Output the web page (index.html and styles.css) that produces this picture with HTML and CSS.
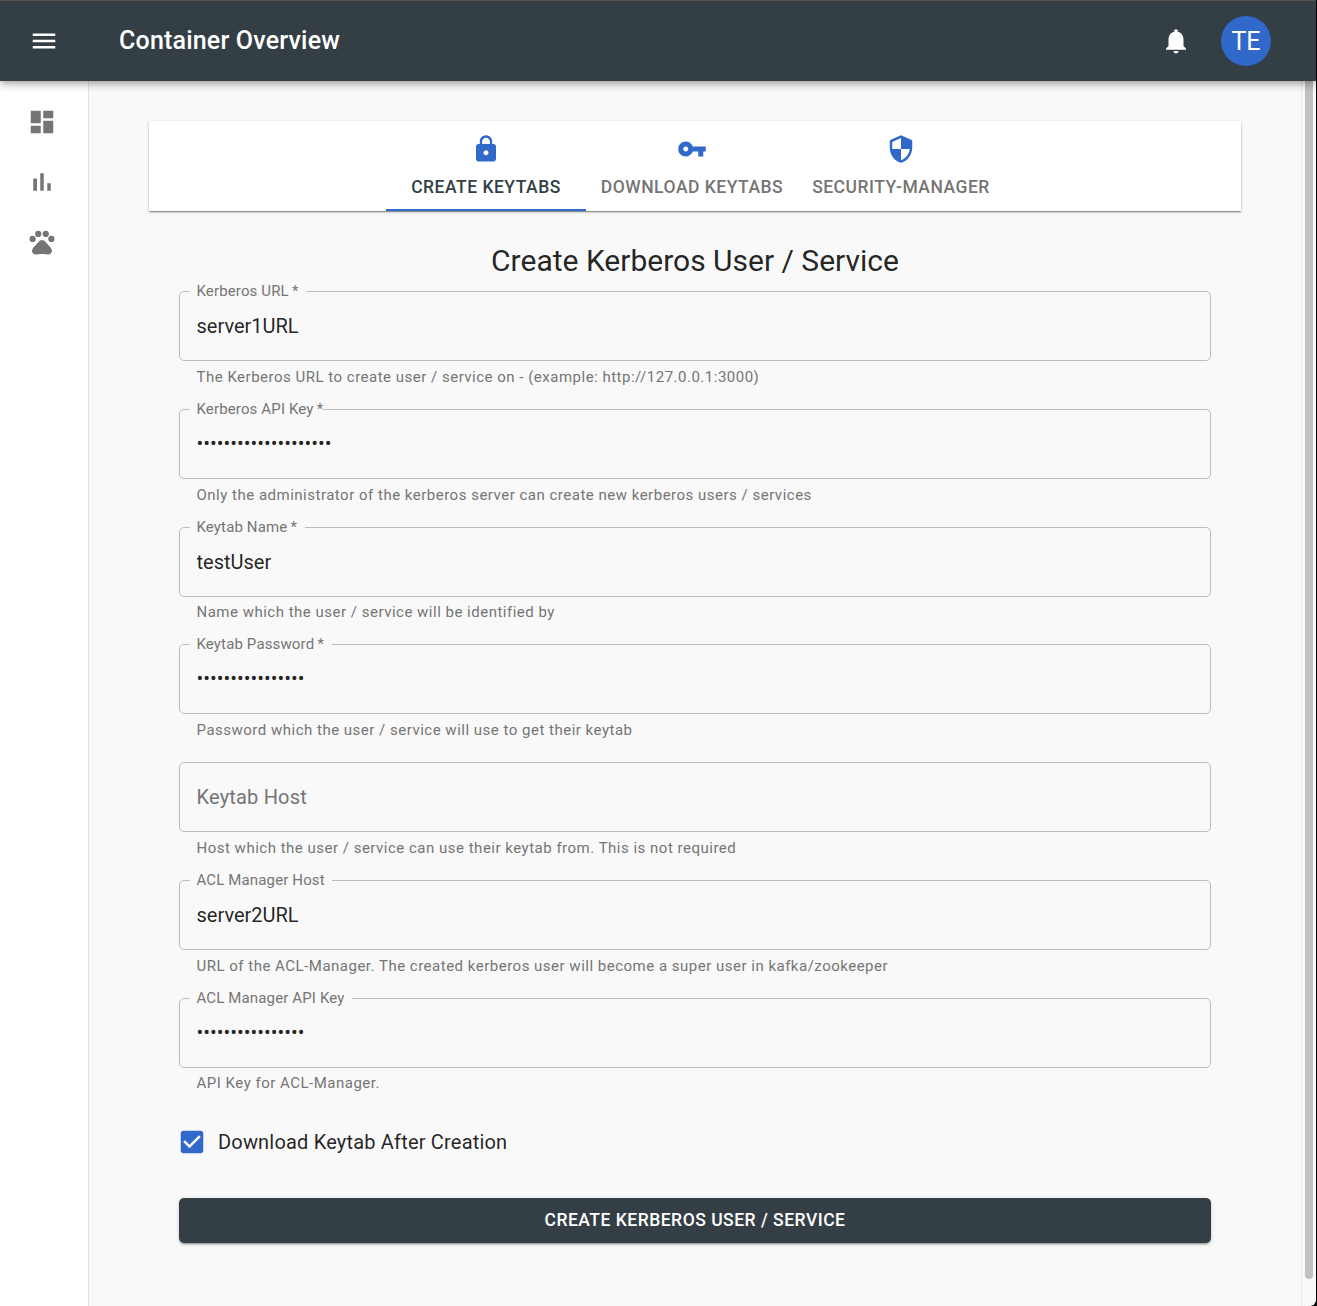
FILE: index.html
```html
<!DOCTYPE html>
<html lang="en">
<head>
<meta charset="utf-8">
<title>Container Overview</title>
<link rel="stylesheet" href="styles.css">
</head>
<body>
<div class="window">
  <header class="appbar">
    <svg class="icon menu" viewBox="0 0 24 24"><path d="M3 18h18v-2H3v2zm0-5h18v-2H3v2zm0-7v2h18V6H3z"/></svg>
    <h1 class="title">Container Overview</h1>
    <svg class="icon bell" viewBox="0 0 24 24"><path d="M12 22c1.1 0 2-.9 2-2h-4c0 1.1.89 2 2 2zm6-6v-5c0-3.07-1.64-5.64-4.5-6.32V4c0-.83-.67-1.5-1.5-1.5s-1.5.67-1.5 1.5v.68C7.63 5.36 6 7.92 6 11v5l-2 2v1h16v-1l-2-2z"/></svg>
    <div class="avatar">TE</div>
  </header>
  <div class="body">
    <nav class="sidebar">
      <svg class="icon" viewBox="0 0 24 24"><path d="M3 13h8V3H3v10zm0 8h8v-6H3v6zm10 0h8V11h-8v10zm0-18v6h8V3h-8z"/></svg>
      <svg class="icon" viewBox="0 0 24 24"><path d="M5 9.2h3V19H5zM10.6 5h2.8v14h-2.8zm5.6 8H19v6h-2.8z"/></svg>
      <svg class="icon" viewBox="0 0 24 24"><circle cx="4.5" cy="9.5" r="2.5"/><circle cx="9" cy="5.5" r="2.5"/><circle cx="15" cy="5.5" r="2.5"/><circle cx="19.5" cy="9.5" r="2.5"/><path d="M17.34 14.86c-.87-1.02-1.6-1.89-2.48-2.91-.46-.54-1.05-1.08-1.75-1.32-.11-.04-.22-.07-.33-.09-.25-.04-.52-.04-.78-.04s-.53 0-.79.05c-.11.02-.22.05-.33.09-.7.24-1.28.78-1.75 1.32-.87 1.02-1.6 1.89-2.48 2.91-1.31 1.31-2.92 2.76-2.62 4.79.29 1.02 1.02 2.03 2.33 2.32.73.15 3.06-.44 5.54-.44h.18c2.48 0 4.81.58 5.54.44 1.31-.29 2.04-1.31 2.33-2.32.31-2.04-1.3-3.49-2.61-4.8z"/></svg>
    </nav>
    <main class="content">
      <div class="tabs">
        <div class="tab active">
          <svg class="icon" viewBox="0 0 24 24"><path d="M18 8h-1V6c0-2.76-2.24-5-5-5S7 3.24 7 6v2H6c-1.1 0-2 .9-2 2v10c0 1.1.9 2 2 2h12c1.1 0 2-.9 2-2V10c0-1.1-.9-2-2-2zm-6 9c-1.1 0-2-.9-2-2s.9-2 2-2 2 .9 2 2-.9 2-2 2zm3.1-9H8.9V6c0-1.71 1.39-3.1 3.1-3.1 1.71 0 3.1 1.39 3.1 3.1v2z"/></svg>
          <span>Create Keytabs</span>
        </div>
        <div class="tab download">
          <svg class="icon" viewBox="0 0 24 24"><path d="M12.65 10C11.83 7.67 9.61 6 7 6c-3.31 0-6 2.69-6 6s2.69 6 6 6c2.61 0 4.83-1.67 5.65-4H17v4h4v-4h2v-4H12.65zM7 14c-1.1 0-2-.9-2-2s.9-2 2-2 2 .9 2 2-.9 2-2 2z"/></svg>
          <span>Download Keytabs</span>
        </div>
        <div class="tab security">
          <svg class="icon" viewBox="0 0 24 24"><path d="M12 1L3 5v6c0 5.55 3.84 10.74 9 12 5.16-1.26 9-6.45 9-12V5l-9-4zm0 10.99h7c-.53 4.12-3.28 7.79-7 8.94V12H5V6.3l7-3.11v8.8z"/></svg>
          <span>Security-Manager</span>
        </div>
      </div>
      <form class="form">
        <h2 class="heading">Create Kerberos User / Service</h2>
        <div class="field">
          <fieldset class="outline"><legend class="label" style="width:116px">Kerberos URL&thinsp;*</legend><input class="input" type="text" value="server1URL"></fieldset>
          <p class="helper">The Kerberos URL to create user / service on - (example: http://127.0.0.1:3000)</p>
        </div>
        <div class="field">
          <fieldset class="outline"><legend class="label" style="width:133px">Kerberos API Key&thinsp;*</legend><input class="input" type="password" value="abcdefghijklmnopqrst"></fieldset>
          <p class="helper">Only the administrator of the kerberos server can create new kerberos users / services</p>
        </div>
        <div class="field tight">
          <fieldset class="outline"><legend class="label" style="width:115px">Keytab Name&thinsp;*</legend><input class="input" type="text" value="testUser"></fieldset>
          <p class="helper">Name which the user / service will be identified by</p>
        </div>
        <div class="field">
          <fieldset class="outline"><legend class="label" style="width:142px">Keytab Password&thinsp;*</legend><input class="input" type="password" value="abcdefghijklmnop"></fieldset>
          <p class="helper">Password which the user / service will use to get their keytab</p>
        </div>
        <div class="field">
          <fieldset class="outline empty"><input class="input" type="text" placeholder="Keytab Host"></fieldset>
          <p class="helper">Host which the user / service can use their keytab from. This is not required</p>
        </div>
        <div class="field">
          <fieldset class="outline"><legend class="label" style="width:142px">ACL Manager Host</legend><input class="input" type="text" value="server2URL"></fieldset>
          <p class="helper">URL of the ACL-Manager. The created kerberos user will become a super user in kafka/zookeeper</p>
        </div>
        <div class="field tight">
          <fieldset class="outline"><legend class="label" style="width:162px">ACL Manager API Key</legend><input class="input" type="password" value="abcdefghijklmnop"></fieldset>
          <p class="helper">API Key for ACL-Manager.</p>
        </div>
        <div class="check">
          <svg class="icon" viewBox="0 0 24 24"><path d="M19 3H5c-1.11 0-2 .9-2 2v14c0 1.1.89 2 2 2h14c1.11 0 2-.9 2-2V5c0-1.1-.89-2-2-2zm-9 14l-5-5 1.41-1.41L10 14.17l7.59-7.59L19 8l-9 9z"/></svg>
          <span>Download Keytab After Creation</span>
        </div>
        <button class="submit" type="button">Create Kerberos User / Service</button>
      </form>
    </main>
    <div class="scrollbar"><div class="thumb"></div></div>
  </div>
</div>
</body>
</html>
```
FILE: styles.css
```css
* { box-sizing: border-box; }
body {
  margin: 0;
  background: #000;
  font-family: Roboto, sans-serif;
  color: rgba(0, 0, 0, .87);
  overflow: hidden;
}
h1, h2, p { margin: 0; font-weight: 400; }
.window {
  width: 1316px;
  height: 1306px;
  display: flex;
  flex-direction: column;
  background: #f9f9f9;
  border-bottom-right-radius: 6px;
  overflow: hidden;
}
.icon { width: 30px; height: 30px; fill: currentColor; flex: none; display: block; }

.appbar {
  height: 81px;
  flex: none;
  display: flex;
  align-items: center;
  padding: 0 45px 0 29px;
  background: #343f45;
  border-top: 1px solid #555250;
  color: #fff;
  z-index: 1;
  box-shadow: 0 2.5px 5px -1.25px rgba(0,0,0,.2), 0 5px 6.25px rgba(0,0,0,.14), 0 1.25px 12.5px rgba(0,0,0,.12);
}
.title {
  flex: 1;
  margin-left: 60px;
  padding-bottom: 2px;
  font-size: 25px;
  font-weight: 500;
  letter-spacing: .0075em;
}
.avatar {
  width: 50px;
  height: 50px;
  margin-left: 30px;
  border-radius: 50%;
  background: #3069c9;
  font-size: 25px;
  line-height: 52px;
  text-align: center;
}

.body { flex: 1; display: flex; min-height: 0; }
.sidebar {
  width: 89px;
  flex: none;
  display: flex;
  flex-direction: column;
  gap: 30.2px;
  padding: 26px 0 0 27px;
  background: #fff;
  border-right: 1px solid #e0e0e0;
  color: #757575;
}
.content { flex: 1; padding: 40px 60px 0; }

.tabs {
  height: 90px;
  display: flex;
  justify-content: center;
  background: #fff;
  box-shadow: 0 1px 3px rgba(0,0,0,.2), 0 1px 1px rgba(0,0,0,.24), 0 2px 1px -1px rgba(0,0,0,.12);
}
.tab {
  padding-top: 13px;
  display: flex;
  flex-direction: column;
  align-items: center;
  gap: 8px;
  color: #757575;
  font-size: 17.5px;
  font-weight: 500;
  line-height: 30px;
  letter-spacing: .02857em;
  text-transform: uppercase;
  white-space: nowrap;
}
.tab .icon { color: #3069c9; }
.tab.active { width: 200px; color: #343f45; border-bottom: 2px solid #3069c9; }
.tab.download { width: 212px; }
.tab.security { width: 206px; }

.form { padding: 30px 30px 0; }
.heading { font-size: 30px; line-height: 40px; text-align: center; height: 50px; }
.field { display: flow-root; height: 118px; }
.field.tight { height: 117px; }
.outline {
  height: 80px;
  min-width: 0;
  margin: -10px 0 0;
  padding: 0 10px;
  border: 1px solid #bdbdbd;
  border-radius: 5px;
}
.outline.empty { height: 70px; margin-top: 0; }
.label {
  padding: 0 0 0 6.5px;
  font-size: 15px;
  line-height: 20px;
  height: 20px;
  letter-spacing: .00938em;
  color: #757575;
  white-space: nowrap;
}
.input {
  display: block;
  width: 100%;
  height: 50px;
  margin: 0;
  padding: 0 6.5px;
  border: 0;
  outline: 0;
  background: none;
  font: 20px Roboto, sans-serif;
  color: rgba(0, 0, 0, .87);
}
.input[type="password"] { padding-bottom: 2px; }
.empty .input { height: 68px; }
.input::placeholder { color: #757575; letter-spacing: .00938em; }
.helper {
  padding: 6px 17.5px 0;
  font-size: 15px;
  line-height: 20px;
  letter-spacing: .03333em;
  color: #757575;
}
.tight .helper { padding-top: 5px; }
.check {
  display: flex;
  align-items: center;
  gap: 11px;
  height: 30px;
  margin: 12px 0 41px -2px;
  font-size: 20px;
  letter-spacing: .00938em;
}
.check .icon { color: #3069c9; }
.submit {
  display: block;
  width: 100%;
  height: 45px;
  padding: 0 0 2px;
  border: 0;
  border-radius: 5px;
  background: #343f45;
  color: #fff;
  font: 500 17.5px Roboto, sans-serif;
  letter-spacing: .02857em;
  text-transform: uppercase;
  box-shadow: 0 3px 1px -2px rgba(0,0,0,.2), 0 2px 2px rgba(0,0,0,.14), 0 1px 5px rgba(0,0,0,.12);
}

.scrollbar {
  width: 15px;
  flex: none;
  padding: 0 3px;
  border-left: 1px solid #e8e8e8;
}
.thumb {
  width: 8px;
  height: 1198px;
  background: #c1c1c1;
  border-radius: 0 0 4px 4px;
}
```
